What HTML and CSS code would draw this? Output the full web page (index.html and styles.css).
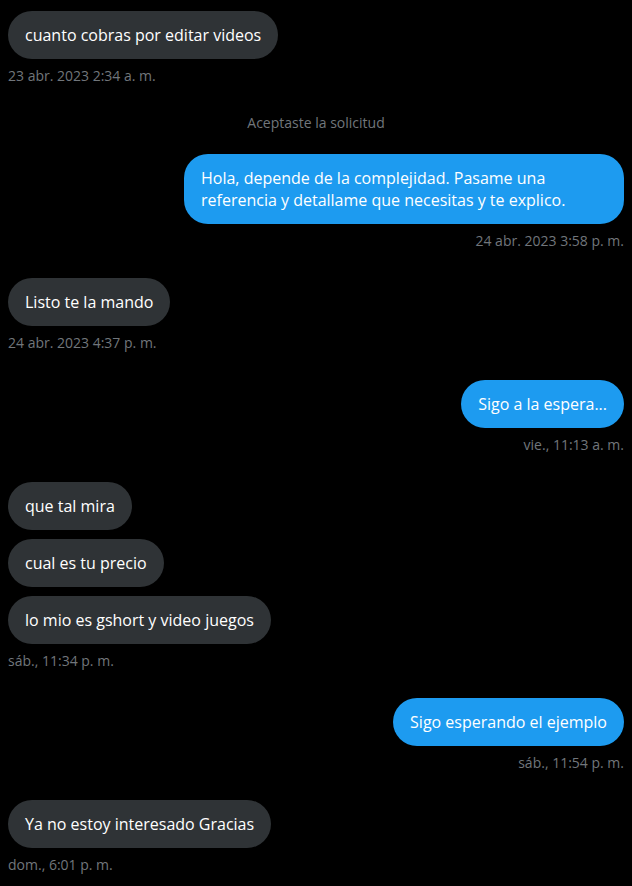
FILE: index.html
```html
<!DOCTYPE html>
<html lang="es">
<head>
    <meta charset="UTF-8">
    <meta name="viewport" content="width=device-width, initial-scale=1.0">
    <title>Mensajes</title>
    <link rel="stylesheet" href="styles.css">
</head>
<body>
    <div class="chat">
        <div class="group received">
            <div class="bubble">cuanto cobras por editar videos</div>
            <div class="time">23 abr. 2023 2:34 a. m.</div>
        </div>

        <div class="notice">Aceptaste la solicitud</div>

        <div class="group sent">
            <div class="bubble">Hola, depende de la complejidad. Pasame una referencia y detallame que necesitas y te explico.</div>
            <div class="time">24 abr. 2023 3:58 p. m.</div>
        </div>

        <div class="group received">
            <div class="bubble">Listo te la mando</div>
            <div class="time">24 abr. 2023 4:37 p. m.</div>
        </div>

        <div class="group sent">
            <div class="bubble">Sigo a la espera...</div>
            <div class="time">vie., 11:13 a. m.</div>
        </div>

        <div class="group received">
            <div class="bubble">que tal mira</div>
            <div class="bubble">cual es tu precio</div>
            <div class="bubble">lo mio es gshort y video juegos</div>
            <div class="time">sáb., 11:34 p. m.</div>
        </div>

        <div class="group sent">
            <div class="bubble">Sigo esperando el ejemplo</div>
            <div class="time">sáb., 11:54 p. m.</div>
        </div>

        <div class="group received">
            <div class="bubble">Ya no estoy interesado Gracias</div>
            <div class="time">dom., 6:01 p. m.</div>
        </div>
    </div>
</body>
</html>
```

FILE: styles.css
```css
* {
    box-sizing: border-box;
    margin: 0;
    padding: 0;
}

body {
    font-family: "Open Sans", "Noto Sans", sans-serif;
    background-color: #000;
    color: #e7e9ea;
}

.chat {
    display: flex;
    flex-direction: column;
    padding: 11px 8px 0;
}

.group {
    display: flex;
    flex-direction: column;
    gap: 9px;
    margin-bottom: 29px;
}

.group.received {
    align-items: flex-start;
}

.group.sent {
    align-items: flex-end;
}

.bubble {
    padding: 13px 17px;
    border-radius: 24px;
    font-size: 16px;
    line-height: 22px;
    color: #fff;
    max-width: 440px;
}

.received .bubble {
    background-color: #2f3336;
}

.sent .bubble {
    background-color: #1d9bf0;
}

.received .bubble:last-of-type {
    border-bottom-left-radius: 0;
}

.sent .bubble:last-of-type {
    border-bottom-right-radius: 0;
}

.time {
    font-size: 14px;
    line-height: 16px;
    color: #71767b;
}

.notice {
    text-align: center;
    font-size: 14px;
    line-height: 16px;
    color: #71767b;
    margin: 2px 0 23px;
}
```
